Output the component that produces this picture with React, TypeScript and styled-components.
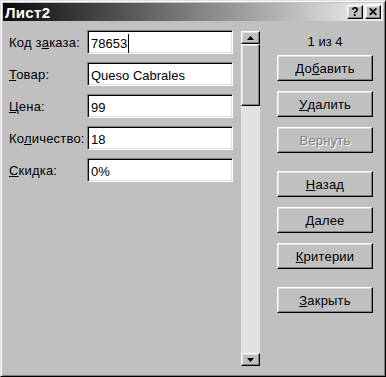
import React from 'react';
import styled, {createGlobalStyle, css} from 'styled-components';

const GlobalStyle = createGlobalStyle`
  html, body {
    margin: 0;
    padding: 0;
    background: #c0c0c0;
  }
  * {
    box-sizing: border-box;
  }
`;

const raised = css`
  border: 1px solid;
  border-color: #ffffff #000000 #000000 #ffffff;
  box-shadow: inset -1px -1px #808080, inset 1px 1px #dfdfdf;
  background: #c0c0c0;
`;

const Window = styled.div`
  width: 386px;
  height: 377px;
  padding: 2px;
  border: 1px solid;
  border-color: #dfdfdf #000000 #000000 #dfdfdf;
  box-shadow: inset 1px 1px #ffffff, inset -1px -1px #808080;
  background: #c0c0c0;
  font-family: 'Liberation Sans', Arial, sans-serif;
  font-size: 13px;
  color: #000;
  display: flex;
  flex-direction: column;
`;

const TitleBar = styled.div`
  height: 18px;
  display: flex;
  align-items: center;
  padding: 0 2px 0 2px;
  background: linear-gradient(to right, #0a0a0a 0%, #f4f4f4 100%);
`;

const Title = styled.div`
  flex: 1;
  color: #ffffff;
  font-weight: bold;
  font-size: 15px;
  letter-spacing: 0.3px;
`;

const TitleButton = styled.div`
  ${raised};
  width: 16px;
  height: 14px;
  margin-left: 2px;
  display: flex;
  align-items: center;
  justify-content: center;
  font-weight: bold;
  font-size: 12px;
  line-height: 1;
`;

const Body = styled.div`
  flex: 1;
  display: flex;
  padding: 9px 0 0 6px;
`;

const Form = styled.div`
  display: flex;
  flex-direction: column;
  gap: 8px;
`;

const Row = styled.div`
  display: flex;
  align-items: center;
  height: 24px;
`;

const Label = styled.label`
  width: 78px;
  white-space: nowrap;
  letter-spacing: 0.2px;
`;

const Field = styled.div`
  width: 146px;
  height: 24px;
  padding: 2px 3px 0 3px;
  display: flex;
  align-items: center;
  background: #ffffff;
  border: 1px solid;
  border-color: #808080 #ffffff #ffffff #808080;
  box-shadow: inset 1px 1px #000000, inset -1px -1px #dfdfdf;
  white-space: nowrap;
`;

const Caret = styled.span`
  display: inline-block;
  width: 1px;
  height: 19px;
  margin-left: 1px;
  background: #000;
`;

const ScrollBar = styled.div`
  width: 19px;
  height: 335px;
  margin: 1px 0 0 8px;
  display: flex;
  flex-direction: column;
  background: #e2e2e2;
`;

const ArrowButton = styled.div`
  ${raised};
  height: 13px;
  display: flex;
  align-items: center;
  justify-content: center;
`;

const Thumb = styled.div`
  ${raised};
  height: 62px;
`;

const Track = styled.div`
  flex: 1;
`;

const Side = styled.div`
  width: 96px;
  margin-left: 17px;
  display: flex;
  flex-direction: column;
`;

const Counter = styled.div`
  height: 25px;
  display: flex;
  align-items: center;
  justify-content: center;
  padding-bottom: 3px;
`;

const Button = styled.div<{$disabled?: boolean; $gap?: number}>`
  ${raised};
  height: 26px;
  margin-top: ${(p) => p.$gap ?? 10}px;
  display: flex;
  align-items: center;
  justify-content: center;
  letter-spacing: 0.2px;
  color: ${(p) => (p.$disabled ? '#808080' : '#000')};
  text-shadow: ${(p) => (p.$disabled ? '1px 1px #ffffff' : 'none')};
`;

const Arrow = ({up}: {up?: boolean}) => (
  <svg width="7" height="4" viewBox="0 0 7 4">
    <path d={up ? 'M3.5 0 L7 4 L0 4 Z' : 'M0 0 L7 0 L3.5 4 Z'} fill="#000" />
  </svg>
);

const fields = [
  {label: <>Код з<u>а</u>каза:</>, value: '78653', caret: true},
  {label: <><u>Т</u>овар:</>, value: 'Queso Cabrales'},
  {label: <><u>Ц</u>ена:</>, value: '99'},
  {label: <>Ко<u>л</u>ичество:</>, value: '18'},
  {label: <><u>С</u>кидка:</>, value: '0%'},
];

export default function App() {
  return (
    <>
      <GlobalStyle />
      <Window>
        <TitleBar>
          <Title>Лист2</Title>
          <TitleButton>?</TitleButton>
          <TitleButton>✕</TitleButton>
        </TitleBar>
        <Body>
          <Form>
            {fields.map((f, i) => (
              <Row key={i}>
                <Label>{f.label}</Label>
                <Field>
                  {f.value}
                  {f.caret && <Caret />}
                </Field>
              </Row>
            ))}
          </Form>
          <ScrollBar>
            <ArrowButton>
              <Arrow up />
            </ArrowButton>
            <Thumb />
            <Track />
            <ArrowButton>
              <Arrow />
            </ArrowButton>
          </ScrollBar>
          <Side>
            <Counter>1 из 4</Counter>
            <Button $gap={0}>
              До<u>б</u>авить
            </Button>
            <Button>
              <u>У</u>далить
            </Button>
            <Button $disabled>Вернуть</Button>
            <Button $gap={18}>
              <u>Н</u>азад
            </Button>
            <Button>
              <u>Д</u>алее
            </Button>
            <Button>
              <u>К</u>ритерии
            </Button>
            <Button $gap={18}>
              <u>З</u>акрыть
            </Button>
          </Side>
        </Body>
      </Window>
    </>
  );
}
